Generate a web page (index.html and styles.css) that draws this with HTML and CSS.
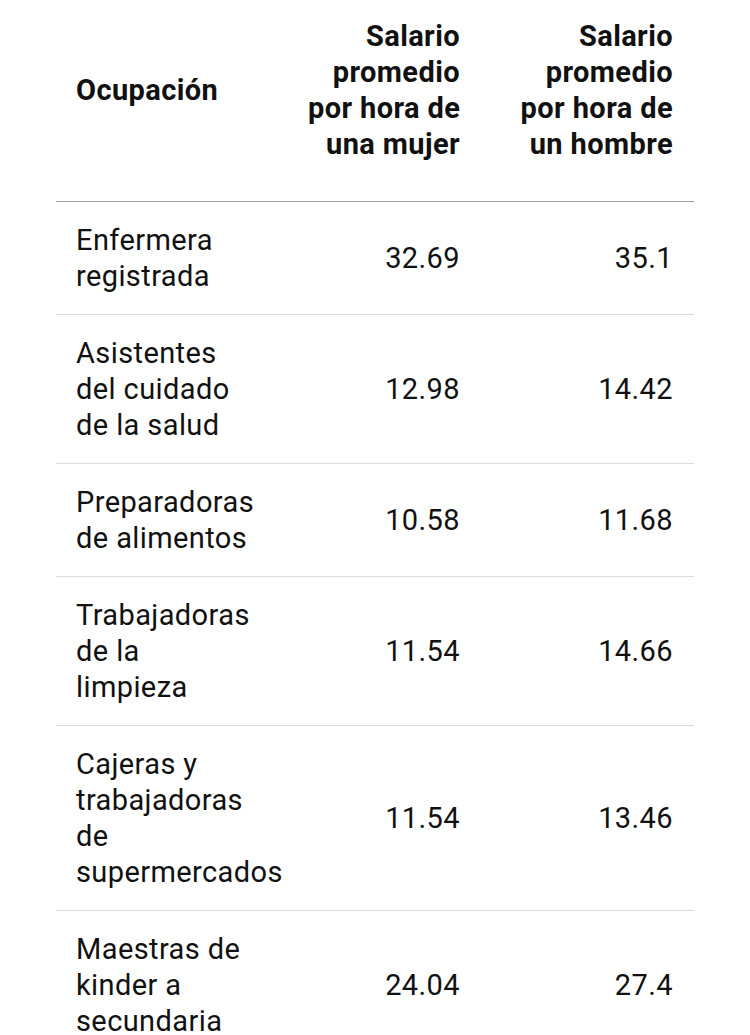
FILE: index.html
```html
<!DOCTYPE html>
<html lang="es">
<head>
<meta charset="utf-8">
<title>Salario promedio por hora</title>
<link rel="stylesheet" href="styles.css">
</head>
<body>
<table class="wages">
  <colgroup>
    <col class="col-occ">
    <col class="col-w">
    <col class="col-m">
  </colgroup>
  <thead>
    <tr>
      <th class="occ">Ocupación</th>
      <th class="num">Salario<br>promedio<br>por hora de<br>una mujer</th>
      <th class="num last">Salario<br>promedio<br>por hora de<br>un hombre</th>
    </tr>
  </thead>
  <tbody>
    <tr>
      <td class="occ">Enfermera<br>registrada</td>
      <td class="num">32.69</td>
      <td class="num last">35.1</td>
    </tr>
    <tr>
      <td class="occ">Asistentes<br>del cuidado<br>de la salud</td>
      <td class="num">12.98</td>
      <td class="num last">14.42</td>
    </tr>
    <tr>
      <td class="occ">Preparadoras<br>de alimentos</td>
      <td class="num">10.58</td>
      <td class="num last">11.68</td>
    </tr>
    <tr>
      <td class="occ">Trabajadoras<br>de la<br>limpieza</td>
      <td class="num">11.54</td>
      <td class="num last">14.66</td>
    </tr>
    <tr>
      <td class="occ">Cajeras y<br>trabajadoras<br>de<br>supermercados</td>
      <td class="num">11.54</td>
      <td class="num last">13.46</td>
    </tr>
    <tr>
      <td class="occ">Maestras de<br>kinder a<br>secundaria</td>
      <td class="num">24.04</td>
      <td class="num last">27.4</td>
    </tr>
  </tbody>
</table>
</body>
</html>
```

FILE: styles.css
```css
html, body {
  margin: 0;
  padding: 0;
  background: #ffffff;
}

body {
  font-family: Roboto, "Liberation Sans", sans-serif;
  font-size: 29px;
  line-height: 36px;
  letter-spacing: 0.4px;
  color: #111111;
}

.wages {
  width: 638px;
  margin: 0 56px;
  border-collapse: collapse;
  table-layout: fixed;
}

.col-occ { width: 232px; }
.col-w { width: 192px; }
.col-m { width: 214px; }

.wages th,
.wages td {
  white-space: nowrap;
  vertical-align: middle;
  padding: 20px 20px;
}

.wages th {
  font-weight: 700;
  padding-top: 18px;
  padding-bottom: 39px;
  border-bottom: 1px solid #9e9e9e;
}

.wages td {
  font-weight: 400;
  border-bottom: 1px solid #dcdcdc;
}

.wages .occ {
  text-align: left;
}

.wages .num {
  text-align: right;
}

.wages .last {
  padding-right: 21px;
}
```
